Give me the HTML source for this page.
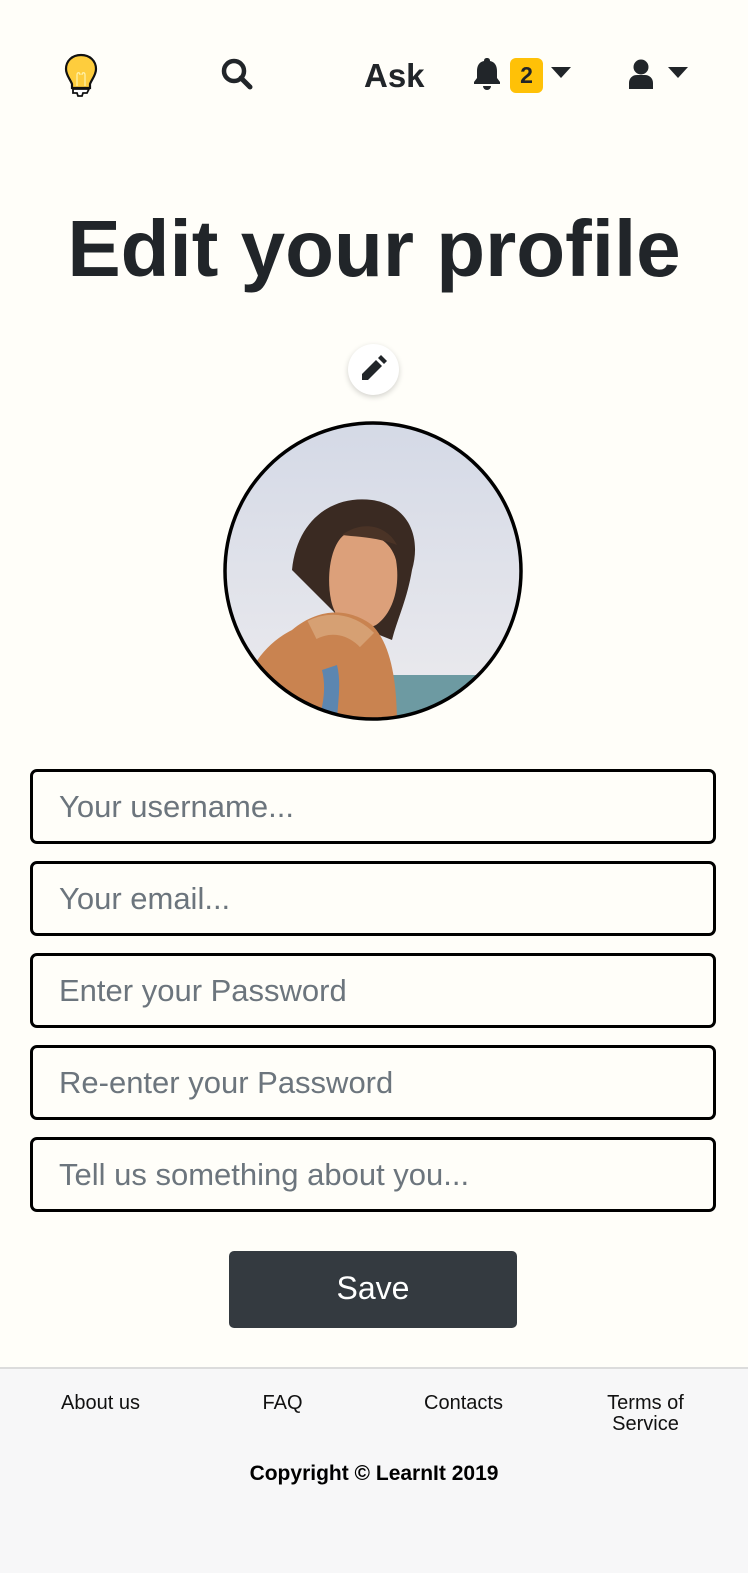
<!DOCTYPE html>
<html><head><meta charset="utf-8"><style>
*{box-sizing:border-box;margin:0;padding:0}
body{width:748px;height:1572px;background:#fffef9;font-family:"Liberation Sans",sans-serif;color:#212529;position:relative;overflow:hidden}
.abs{position:absolute}
h1{position:absolute;left:0;width:748px;top:204px;text-align:center;font-size:80px;font-weight:bold;line-height:90px;color:#212529}
.inp{position:absolute;left:30px;width:686px;height:75px;border:3px solid #000;border-radius:7px;font-size:31px;color:#6c757d;padding-left:26px;line-height:69px}
.save{position:absolute;left:229px;top:1251px;width:288px;height:77px;background:#343a40;border-radius:5px;color:#fff;font-size:32px;text-align:center;line-height:75px}
footer{position:absolute;left:0;top:1367px;width:748px;height:206px;background:#f7f7f8;border-top:2px solid #dcdcdc}
.fl{position:absolute;top:24px;width:187px;text-align:center;font-size:20px;line-height:21px;color:#111}
.copy{position:absolute;top:93px;width:748px;text-align:center;font-weight:bold;font-size:21px;color:#000}
</style></head><body>
<svg class="abs" style="left:62px;top:53px" width="38" height="46" viewBox="0 0 38 46">
<path d="M19 2C10 2 4 8 4 16c0 6 4 10 6 15v4h18v-4c2-5 6-9 6-15C34 8 28 2 19 2z" fill="#fecd3d" stroke="#111" stroke-width="2.2"/>
<path d="M15 33V22c0-3 3-3 3 0M23 33V22c0-3-3-3-3 0" fill="none" stroke="#fff3b0" stroke-width="1.2"/>
<path d="M11 36h16l-2 4h-4l-1 3h-4l-1-3h-4z" fill="#fff" stroke="#111" stroke-width="1.8"/>
</svg>
<svg class="abs" style="left:220px;top:57px" width="34" height="34" viewBox="0 0 34 34">
<circle cx="14" cy="14" r="10" fill="none" stroke="#212529" stroke-width="4.5"/><path d="M21 21l9 9" stroke="#212529" stroke-width="5" stroke-linecap="round"/>
</svg>
<div class="abs" style="left:364px;top:57px;font-size:33px;font-weight:bold;line-height:38px">Ask</div>
<svg class="abs" style="left:472px;top:56px" width="30" height="36" viewBox="0 0 30 36">
<path d="M15 2c-2 0-3 1-3 3C7 6 5 10 5 15v7l-3 4v2h26v-2l-3-4v-7c0-5-2-9-7-10 0-2-1-3-3-3z" fill="#212529"/><path d="M11 30a4 4 0 0 0 8 0z" fill="#212529"/>
</svg>
<div class="abs" style="left:510px;top:58px;width:33px;height:35px;background:#ffc107;border-radius:6px;font-weight:bold;font-size:23px;text-align:center;line-height:35px;color:#212529">2</div>
<svg class="abs" style="left:550px;top:66px" width="22" height="13"><path d="M1 1h20L11 12z" fill="#212529"/></svg>
<svg class="abs" style="left:626px;top:58px" width="30" height="32" viewBox="0 0 30 32">
<circle cx="15" cy="9" r="7.5" fill="#212529"/><path d="M3 31v-6c0-5 4-8 8-8h8c4 0 8 3 8 8v6z" fill="#212529"/>
</svg>
<svg class="abs" style="left:667px;top:66px" width="22" height="13"><path d="M1 1h20L11 12z" fill="#212529"/></svg>
<h1>Edit your profile</h1>
<div class="abs" style="left:348px;top:344px;width:51px;height:51px;border-radius:50%;background:#fff;box-shadow:0 2px 6px rgba(0,0,0,.18)"></div>
<svg class="abs" style="left:358px;top:354px" width="30" height="30" viewBox="0 0 30 30"><path d="M4 20L18 6l6 6-14 14H4z" fill="#212529"/><path d="M20 4l3-3 6 6-3 3z" fill="#212529"/></svg>
<svg class="abs" style="left:222px;top:420px" width="302" height="302" viewBox="0 0 302 302">
<defs><clipPath id="c"><circle cx="151" cy="151" r="148"/></clipPath>
<linearGradient id="s" x1="0" y1="0" x2="0" y2="1"><stop offset="0" stop-color="#d4d9e6"/><stop offset="1" stop-color="#ecebee"/></linearGradient></defs>
<g clip-path="url(#c)">
<rect width="302" height="302" fill="url(#s)"/>
<rect y="255" width="302" height="50" fill="#6d9aa2"/>
<path d="M70 150c5-50 40-75 80-70 35 5 50 35 40 70-5 30-15 50-20 70l-50-20z" fill="#3a2a22"/>
<path d="M122 115c20-5 45 0 52 25 5 30-5 55-20 65-20 10-40 0-45-25-5-25 0-55 13-65z" fill="#dca07a"/>
<path d="M120 115c20-15 45-10 55 10-20-8-40-8-55-10z" fill="#4a3326"/>
<path d="M70 210c30-25 60-20 80-5 20 20 25 60 25 100H10c10-50 30-80 60-95z" fill="#c98350"/>
<path d="M90 210c20-10 40-5 55 10" stroke="#e0b48a" stroke-width="20" fill="none" opacity=".6"/>
<path d="M100 250c5 20 0 40-5 55h20c0-20 5-40 0-60z" fill="#5c86b0"/>
</g>
<circle cx="151" cy="151" r="148" fill="none" stroke="#000" stroke-width="3.5"/>
</svg>
<div class="inp" style="top:769px">Your username...</div>
<div class="inp" style="top:861px">Your email...</div>
<div class="inp" style="top:953px">Enter your Password</div>
<div class="inp" style="top:1045px">Re-enter your Password</div>
<div class="inp" style="top:1137px">Tell us something about you...</div>
<div class="save">Save</div>
<footer>
<div class="fl" style="left:7px">About us</div>
<div class="fl" style="left:189px">FAQ</div>
<div class="fl" style="left:370px">Contacts</div>
<div class="fl" style="left:552px">Terms of<br>Service</div>
<div class="copy">Copyright © LearnIt 2019</div>
</footer>
</body></html>
